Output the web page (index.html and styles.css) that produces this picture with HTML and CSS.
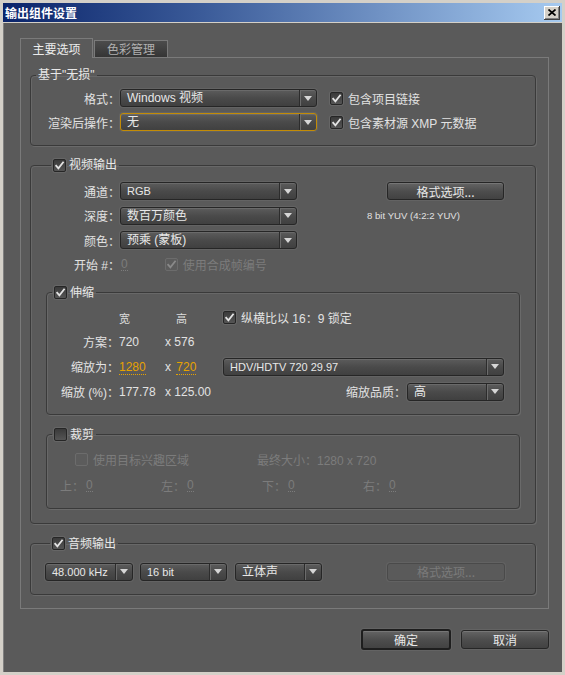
FILE: index.html
```html
<!DOCTYPE html>
<html lang="zh-CN">
<head>
<meta charset="utf-8">
<title>输出组件设置</title>
<link rel="stylesheet" href="styles.css">
</head>
<body>
<div class="window">
  <div class="titlebar">
    <span class="title">输出组件设置</span>
    <span class="close"><svg width="8" height="7" viewBox="0 0 8 7"><path d="M0.5 0.5 L7.5 6.5 M7.5 0.5 L0.5 6.5" stroke="#000" stroke-width="1.7" fill="none"/></svg></span>
  </div>
  <div class="client">
    <div class="tabs">
      <div class="tab active">主要选项</div>
      <div class="tab-gap"></div>
      <div class="tab">色彩管理</div>
      <div class="tab-fill"></div>
    </div>
    <div class="panel">
      <fieldset class="group g-base">
        <legend><span class="lg">基于"无损"</span></legend>
        <div class="row">
          <span class="lbl">格式：</span>
          <div class="select w197"><span class="val">Windows 视频</span><span class="arrow"></span></div>
          <span class="cb on side"><svg viewBox="0 0 11 11"><path d="M1.6 5.2 L4.4 8.4 L9.6 1.8" stroke="#e4e4e4" stroke-width="1.8" fill="none"/></svg></span>
          <span class="cbtext">包含项目链接</span>
        </div>
        <div class="row">
          <span class="lbl">渲染后操作：</span>
          <div class="select w197 focus"><span class="val">无</span><span class="arrow"></span></div>
          <span class="cb on side"><svg viewBox="0 0 11 11"><path d="M1.6 5.2 L4.4 8.4 L9.6 1.8" stroke="#e4e4e4" stroke-width="1.8" fill="none"/></svg></span>
          <span class="cbtext">包含素材源 XMP 元数据</span>
        </div>
      </fieldset>

      <fieldset class="group g-video">
        <legend><span class="lg"><span class="cb on"><svg viewBox="0 0 11 11"><path d="M1.6 5.2 L4.4 8.4 L9.6 1.8" stroke="#e4e4e4" stroke-width="1.8" fill="none"/></svg></span>视频输出</span></legend>
        <div class="row vrow">
          <span class="lbl lbl-v">通道：</span>
          <div class="select w177"><span class="val lat">RGB</span><span class="arrow"></span></div>
          <div class="btn fmt-btn">格式选项...</div>
        </div>
        <div class="row vrow">
          <span class="lbl lbl-v">深度：</span>
          <div class="select w177"><span class="val">数百万颜色</span><span class="arrow"></span></div>
          <span class="yuv">8 bit YUV (4:2:2 YUV)</span>
        </div>
        <div class="row vrow">
          <span class="lbl lbl-v">颜色：</span>
          <div class="select w177"><span class="val">预乘 (蒙板)</span><span class="arrow"></span></div>
        </div>
        <div class="row vrow">
          <span class="lbl lbl-v">开始 #：</span>
          <span class="zero start-zero">0</span>
          <span class="cb on disabled frame-cb"><svg viewBox="0 0 11 11"><path d="M1.6 5.2 L4.4 8.4 L9.6 1.8" stroke="#8a8a8a" stroke-width="1.8" fill="none"/></svg></span>
          <span class="cbtext dis">使用合成帧编号</span>
        </div>

        <fieldset class="group sub g-scale">
          <legend><span class="lg"><span class="cb on"><svg viewBox="0 0 11 11"><path d="M1.6 5.2 L4.4 8.4 L9.6 1.8" stroke="#e4e4e4" stroke-width="1.8" fill="none"/></svg></span>伸缩</span></legend>
          <div class="row srow">
            <span class="sc-lbl"></span>
            <span class="sc-c1 head">宽</span>
            <span class="sc-c2 head head2">高</span>
            <span class="cb on"><svg viewBox="0 0 11 11"><path d="M1.6 5.2 L4.4 8.4 L9.6 1.8" stroke="#e4e4e4" stroke-width="1.8" fill="none"/></svg></span>
            <span class="cbtext">纵横比以 16：9 锁定</span>
          </div>
          <div class="row srow">
            <span class="sc-lbl">方案：</span>
            <span class="sc-c1">720</span>
            <span class="sc-c2">x 576</span>
          </div>
          <div class="row srow">
            <span class="sc-lbl">缩放为：</span>
            <span class="sc-c1"><span class="link">1280</span></span>
            <span class="sc-c2">x <span class="link link2">720</span></span>
            <div class="select grow"><span class="val lat">HDV/HDTV 720 29.97</span><span class="arrow"></span></div>
          </div>
          <div class="row srow">
            <span class="sc-lbl">缩放 (%)：</span>
            <span class="sc-c1">177.78</span>
            <span class="sc-c2">x 125.00</span>
            <span class="spacer"></span>
            <span class="q-lbl">缩放品质：</span>
            <div class="select w97"><span class="val">高</span><span class="arrow"></span></div>
          </div>
        </fieldset>

        <fieldset class="group sub g-crop">
          <legend><span class="lg"><span class="cb"></span>裁剪</span></legend>
          <div class="row crow">
            <span class="roi">
              <span class="cb disabled"></span>
              <span class="cbtext dis">使用目标兴趣区域</span>
            </span>
            <span class="dis">最终大小：1280 x 720</span>
          </div>
          <div class="row crow crop-edges">
            <span class="crop-item dis">上：<span class="zero">0</span></span>
            <span class="crop-item dis">左：<span class="zero">0</span></span>
            <span class="crop-item dis">下：<span class="zero">0</span></span>
            <span class="crop-item dis">右：<span class="zero">0</span></span>
          </div>
        </fieldset>
      </fieldset>

      <fieldset class="group g-audio">
        <legend><span class="lg"><span class="cb on"><svg viewBox="0 0 11 11"><path d="M1.6 5.2 L4.4 8.4 L9.6 1.8" stroke="#e4e4e4" stroke-width="1.8" fill="none"/></svg></span>音频输出</span></legend>
        <div class="row arow">
          <div class="select w88"><span class="val lat">48.000 kHz</span><span class="arrow"></span></div>
          <div class="select w87 a2"><span class="val lat">16 bit</span><span class="arrow"></span></div>
          <div class="select w87 a3"><span class="val">立体声</span><span class="arrow"></span></div>
          <div class="btn disabled a-btn">格式选项...</div>
        </div>
      </fieldset>
    </div>

    <div class="footer">
      <div class="btn default ok">确定</div>
      <div class="btn cancel">取消</div>
    </div>
  </div>
</div>
</body>
</html>
```
FILE: styles.css
```css
* { box-sizing: border-box; }
html, body { margin: 0; padding: 0; }
body {
  width: 565px; height: 675px; overflow: hidden;
  background: #5a5a5a;
  font-family: "Liberation Sans", "Noto Sans CJK SC", sans-serif;
  font-size: 12px; color: #e2e2e2;
}
.window {
  width: 565px; height: 675px;
  border: 3px solid #d4d0c8;
  box-shadow: inset 1px 1px 0 #808080;
  background: #5a5a5a;
  display: flex; flex-direction: column;
}
.titlebar {
  flex: none; height: 20px;
  background: linear-gradient(to right, #0a246a 0%, #3a5a98 35%, #a6caf0 100%);
  border-bottom: 1px solid #d4d0c8;
  display: flex; align-items: center; justify-content: space-between;
  padding: 0 2px 0 2px;
}
.title {
  font-family: "Noto Sans CJK SC", sans-serif;
  font-weight: bold; color: #fff; font-size: 12px; line-height: 14px;
}
.close {
  width: 16px; height: 14px;
  background: #d4d0c8;
  box-shadow: inset -1px -1px 0 #404040, inset 1px 1px 0 #fff, inset -2px -2px 0 #808080;
  display: flex; align-items: center; justify-content: center;
}
.client { flex: 1; padding: 15px 13px 0 17px; }

/* tabs */
.tabs { display: flex; align-items: flex-end; height: 20px; }
.tab {
  width: 74px; height: 18px;
  border: 1px solid #7a7a7a;
  background: linear-gradient(#4c4c4c, #353535);
  color: #b0b0b0; text-align: center; line-height: 16px;
  font-family: "Noto Sans CJK SC", sans-serif;
}
.tab.active {
  width: 73px; height: 20px; border-bottom: none;
  background: #5a5a5a; color: #ececec; line-height: 19px;
}
.tab-gap { width: 1px; height: 1px; border-bottom: 1px solid #7a7a7a; }
.tab-fill { flex: 1; height: 1px; border-bottom: 1px solid #7a7a7a; }

.panel {
  width: 529px;
  border: 1px solid #7a7a7a; border-top: none;
  padding: 10px 12px 13px 9px;
}

/* groups */
fieldset.group {
  margin: 0; padding: 0; min-width: 0;
  border: 1px solid #3a3a3a; border-radius: 4px;
  box-shadow: 1px 1px 0 #6a6a6a, inset 1px 1px 0 #686868;
}
legend { margin-left: 5px; padding: 0 2px; }
.lg {
  display: inline-flex; align-items: center; gap: 3px;
  height: 14px; line-height: 14px; vertical-align: top;
  color: #e8e8e8;
}
.g-base { padding: 7px 0 14px 0 !important; }
.g-video { margin-top: 12px !important; padding: 10px 15px 14px 15px !important; }
.g-audio { margin-top: 13px !important; padding: 12px 0 13px 14px !important; }
.g-scale { margin-top: 12px !important; padding: 9px 15px 13px 0 !important; }
.g-crop { margin-top: 13px !important; padding: 9px 15px 13px 0 !important; }

.row { display: flex; align-items: center; height: 18px; white-space: nowrap; }
.row + .row { margin-top: 6px; }
.vrow + .vrow { margin-top: 6.5px; }
.srow + .srow { margin-top: 7px; }
.srow:nth-child(3) { margin-top: 6px; }
.crow + .crow { margin-top: 8px; }

.lbl { width: 89px; text-align: right; }
.lbl-v { width: 74px; }

/* select */
.select {
  display: flex; align-items: center; height: 18px; flex: none;
  border: 1px solid #262626; border-radius: 3px;
  background: linear-gradient(#5c5c5c, #4a4a4a 50%, #404040);
  box-shadow: inset 0 1px 0 #6a6a6a, 0 0 0 1px #636363;
}
.select.focus { border-color: #c38c06; }
.select .val {
  flex: 1; padding-left: 6px; line-height: 16px;
  overflow: hidden; white-space: nowrap; color: #e8e8e8;
}
.lat { font-size: 11px; }
.select .arrow {
  width: 17px; height: 16px; flex: none;
  border-left: 1px solid #2c2c2c;
  box-shadow: inset 1px 0 0 #6c6c6c;
  display: flex; align-items: center; justify-content: center;
}
.select .arrow::after {
  content: ""; width: 0; height: 0;
  border-left: 4px solid transparent; border-right: 4px solid transparent;
  border-top: 5px solid #d6d6d6;
}
.w197 { width: 197px; }
.w177 { width: 177px; }
.w97 { width: 97px; margin-left: 1px; }
.w88 { width: 88px; }
.w87 { width: 87px; }
.grow { flex: 1; }
.a2 { margin-left: 7px; }
.a3 { margin-left: 8px; }

/* checkbox */
.cb {
  width: 13px; height: 13px; flex: none;
  border: 1px solid #262626; border-radius: 2px;
  background: linear-gradient(#3a3a3a, #555555);
  box-shadow: 0 0 0 1px #666666;
  display: inline-flex;
}
.cb svg { width: 11px; height: 11px; display: block; }
.cb.disabled {
  border-color: #6c6c6c; background: #5c5c5c; box-shadow: none;
}
.cbtext { margin-left: 5px; }
.side { margin-left: 13px; }
.dis { color: #7c7c7c; }

/* buttons */
.btn {
  display: flex; align-items: center; justify-content: center;
  height: 18px; flex: none;
  border: 1px solid #262626; border-radius: 3px;
  background: linear-gradient(#646464, #4e4e4e 50%, #424242);
  box-shadow: inset 0 1px 0 #767676, 0 0 0 1px #636363;
  color: #e8e8e8;
  font-family: "Noto Sans CJK SC", sans-serif;
}
.btn.disabled {
  background: #5a5a5a; border-color: #4a4a4a;
  box-shadow: 0 0 0 1px #626262; color: #7a7a7a;
}
.fmt-btn { width: 117px; margin-left: 90px; }
.a-btn { width: 118px; margin-left: 65px; }

.yuv { margin-left: 70px; font-size: 9.6px; color: #e0e0e0; }
.zero { color: #7c7c7c; border-bottom: 1px dotted #7c7c7c; line-height: 12px; }
.start-zero { margin-left: 1px; }
.frame-cb { margin-left: 37px; }

/* scale */
.sc-lbl { width: 72px; text-align: right; flex: none; }
.sc-c1 { width: 46px; flex: none; }
.sc-c2 { width: 58px; flex: none; }
.head { color: #dcdcdc; font-size: 11px; }
.head2 { padding-left: 11px; }
.link { color: #e6a200; border-bottom: 1px dotted #e6a200; line-height: 12px; }
.link2 { margin-left: 2px; }
.spacer { flex: 1; }

/* crop */
.roi { width: 182px; margin-left: 28px; display: flex; align-items: center; flex: none; }
.crop-edges { padding-left: 13px; }
.crop-item { width: 101px; display: flex; align-items: center; }
.crop-item .zero { margin-left: 2px; }

/* footer */
.footer {
  display: flex; justify-content: flex-end; align-items: center;
  gap: 10px; margin-top: 20px;
}
.ok { width: 90px; height: 21px; border: 2px solid #1e1e1e; }
.cancel { width: 88px; height: 19px; }
```
